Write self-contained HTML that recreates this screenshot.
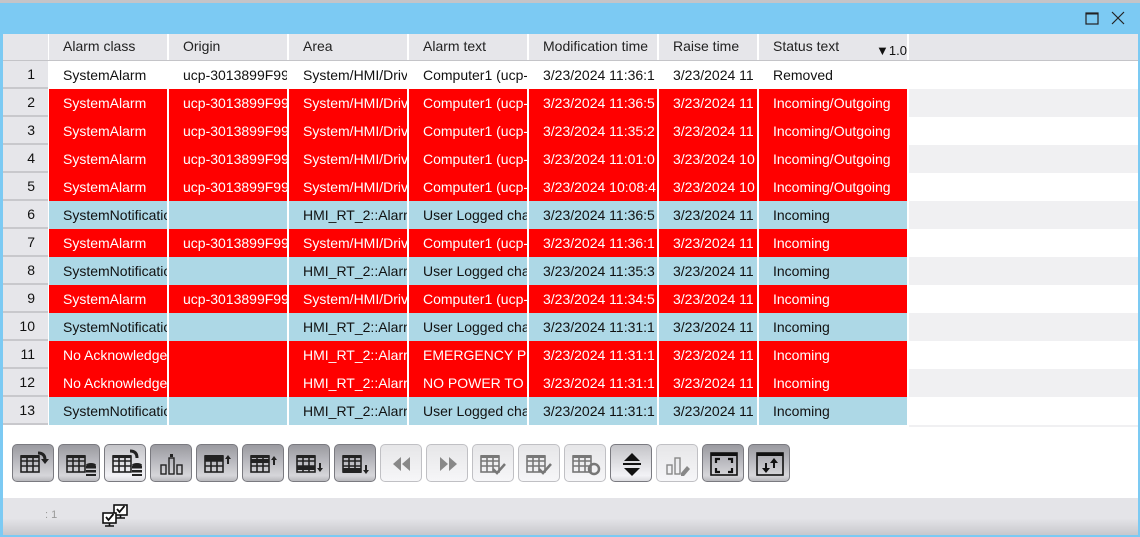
<!DOCTYPE html>
<html><head><meta charset="utf-8"><style>
*{margin:0;padding:0;box-sizing:border-box}
body{width:1140px;height:537px;overflow:hidden;background:#fff;font-family:"Liberation Sans","DejaVu Sans",sans-serif;position:relative}
.topline{position:absolute;left:0;top:0;width:1140px;height:3px;background:#c4c4c8}
.title{position:absolute;left:0;top:3px;width:1140px;height:31px;background:#7ccaf3}
.lb{position:absolute;left:0;top:3px;width:3px;height:534px;background:#7ccaf3}
.rb{position:absolute;right:0;top:3px;width:2px;height:534px;background:#7ccaf3}
.bb{position:absolute;left:0;bottom:0;width:1140px;height:2px;background:#7ccaf3}
.cell{position:absolute;height:28px;line-height:28px;font-size:14px;white-space:nowrap;overflow:hidden;padding-left:14px;color:#111}
.hd{position:absolute;top:34px;height:26px;line-height:25px;font-size:14px;background:#e6e6ea;color:#222;padding-left:14px;white-space:nowrap;overflow:hidden}
.num{position:absolute;left:3px;width:45px;height:26px;background:#e6e6ea;text-align:right;padding-right:13px;font-size:14px;line-height:26px;color:#111}
.btn{position:absolute;top:444px;width:42px;height:38px;border-radius:5px;border:1px solid #7a7a80;background:linear-gradient(#9a9aa0,#d6d6da 85%,#b8b8bc)}
.btn.sel{background:linear-gradient(#c4c4c8,#f2f2f6 85%,#dcdce0)}
.btn.dis{border-color:#c0c0c4;background:linear-gradient(#e6e6e8,#f6f6f8)}
.btn svg{position:absolute;left:0;top:0}
.status{position:absolute;left:3px;top:498px;width:1135px;height:37px;background:linear-gradient(#e4e4e8 55%,#c8c8cc)}
</style></head><body>
<div class="topline"></div><div class="title"></div>
<svg style="position:absolute;left:1085px;top:11px" width="14" height="14"><rect x="1" y="2" width="12" height="11" fill="none" stroke="#222" stroke-width="1.2"/><line x1="1" y1="2.5" x2="13" y2="2.5" stroke="#222" stroke-width="2"/></svg>
<svg style="position:absolute;left:1111px;top:11px" width="14" height="14"><path d="M1 1L13 13M13 1L1 13" stroke="#222" stroke-width="1.2"/></svg>
<div class="lb"></div><div class="rb"></div>
<div id="g"></div>
<div class="status"><span style="position:absolute;left:42px;top:11px;font-size:11px;color:#999">: 1</span>
<svg style="position:absolute;left:96px;top:5px" width="36" height="28" viewBox="0 0 36 28"><g fill="#fff" stroke="#111" stroke-width="1.6"><rect x="15" y="2" width="13" height="10"/><rect x="4" y="10" width="13" height="10"/></g><path d="M21.5 12v3M17 15h9M10.5 20v3M6 23h9" stroke="#111" stroke-width="1.6"/><path d="M18 6l2.5 3 5-6M7 14l2.5 3 5-6" stroke="#111" stroke-width="1.8" fill="none"/></svg></div>
<div class="bb"></div>
<script>
var cols=[[49,118,"Alarm class"],[169,118,"Origin"],[289,118,"Area"],[409,118,"Alarm text"],[529,128,"Modification time"],[659,98,"Raise time"],[759,148,"Status text"]];
var rows=[
["w","SystemAlarm","ucp-3013899F99","System/HMI/Drivers","Computer1 (ucp-","3/23/2024 11:36:1","3/23/2024 11","Removed"],
["r","SystemAlarm","ucp-3013899F99","System/HMI/Drivers","Computer1 (ucp-","3/23/2024 11:36:5","3/23/2024 11","Incoming/Outgoing"],
["r","SystemAlarm","ucp-3013899F99","System/HMI/Drivers","Computer1 (ucp-","3/23/2024 11:35:2","3/23/2024 11","Incoming/Outgoing"],
["r","SystemAlarm","ucp-3013899F99","System/HMI/Drivers","Computer1 (ucp-","3/23/2024 11:01:0","3/23/2024 10","Incoming/Outgoing"],
["r","SystemAlarm","ucp-3013899F99","System/HMI/Drivers","Computer1 (ucp-","3/23/2024 10:08:4","3/23/2024 10","Incoming/Outgoing"],
["b","SystemNotification","","HMI_RT_2::Alarms","User Logged changed","3/23/2024 11:36:5","3/23/2024 11","Incoming"],
["r","SystemAlarm","ucp-3013899F99","System/HMI/Drivers","Computer1 (ucp-","3/23/2024 11:36:1","3/23/2024 11","Incoming"],
["b","SystemNotification","","HMI_RT_2::Alarms","User Logged changed","3/23/2024 11:35:3","3/23/2024 11","Incoming"],
["r","SystemAlarm","ucp-3013899F99","System/HMI/Drivers","Computer1 (ucp-","3/23/2024 11:34:5","3/23/2024 11","Incoming"],
["b","SystemNotification","","HMI_RT_2::Alarms","User Logged changed","3/23/2024 11:31:1","3/23/2024 11","Incoming"],
["r","No Acknowledgement","","HMI_RT_2::Alarms","EMERGENCY PRESSED","3/23/2024 11:31:1","3/23/2024 11","Incoming"],
["r","No Acknowledgement","","HMI_RT_2::Alarms","NO POWER TO AUX","3/23/2024 11:31:1","3/23/2024 11","Incoming"],
["b","SystemNotification","","HMI_RT_2::Alarms","User Logged changed","3/23/2024 11:31:1","3/23/2024 11","Incoming"]];
var h='<div style="position:absolute;left:3px;top:34px;width:1135px;height:393px;background:#fff"></div>';
h+='<div class="hd" style="left:3px;width:45px"></div>';
cols.forEach(function(c){h+='<div class="hd" style="left:'+c[0]+'px;width:'+c[1]+'px">'+c[2]+'</div>'});
h+='<div class="hd" style="left:909px;width:229px"></div>';
h+='<div style="position:absolute;left:876px;top:43px;font-size:13px;color:#111">&#9660;1.0</div>';
h+='<div style="position:absolute;left:3px;top:60px;width:1135px;height:1px;background:#c4c4c8"></div>';
rows.forEach(function(r,i){var y=61+28*i;
 h+='<div class="num" style="top:'+y+'px">'+(i+1)+'</div>';
 h+='<div style="position:absolute;left:3px;top:'+(y+26)+'px;width:45px;height:2px;background:#c8c8cc"></div>';
 var bg=r[0]=="r"?"#ff0000":r[0]=="b"?"#add8e6":"#fff",fc=r[0]=="r"?"#fff":"#111";
 cols.forEach(function(c,j){h+='<div class="cell" style="left:'+c[0]+'px;top:'+y+'px;width:'+c[1]+'px;background:'+bg+';color:'+fc+'">'+r[j+1]+'</div>'});
 h+='<div style="position:absolute;left:909px;top:'+y+'px;width:229px;height:28px;background:'+(i%2?"#f0f0f2":"#fff")+'"></div>';
});
h+='<div style="position:absolute;left:909px;top:425px;width:229px;height:2px;background:#f0f0f2"></div>';
var grid='<g fill="none" stroke="#222" stroke-width="1.6"><rect x="8" y="11" width="18" height="16"/><path d="M8 16h18M8 21h18M14 11v16M20 11v16"/></g><rect x="8" y="10" width="18" height="3" fill="#222"/>';
var gridg=grid.replace(/#222/g,'#777');
var ic=[
grid+'<path d="M25 8q7 0 7 7" stroke="#222" stroke-width="3" fill="none"/><path d="M28 14h8l-4 5z" fill="#222"/>',
grid+'<g fill="#222"><ellipse cx="32" cy="20" rx="5" ry="2"/><rect x="27" y="21" width="10" height="2.5"/><rect x="27" y="25" width="10" height="2.5"/><rect x="27" y="29" width="10" height="2"/></g>',
grid+'<path d="M25 6q7 0 7 7" stroke="#222" stroke-width="3" fill="none"/><g fill="#222"><ellipse cx="32" cy="20" rx="5" ry="2"/><rect x="27" y="21" width="10" height="2.5"/><rect x="27" y="25" width="10" height="2.5"/><rect x="27" y="29" width="10" height="2"/></g>',
'<g fill="none" stroke="#222" stroke-width="1.4"><rect x="10" y="20" width="5" height="9"/><rect x="18" y="13" width="5" height="16"/><rect x="26" y="20" width="5" height="9"/></g><rect x="19" y="9" width="3" height="3" fill="#222"/>',
grid+'<rect x="8" y="10" width="18" height="6" fill="#222"/><path d="M31 10l3 4h-2v5h-2v-5h-2z" fill="#222"/>',
grid+'<rect x="8" y="14" width="18" height="4" fill="#222"/><path d="M31 11l3 4h-2v5h-2v-5h-2z" fill="#222"/>',
grid+'<rect x="8" y="21" width="18" height="4" fill="#222"/><path d="M31 27l3-4h-2v-5h-2v5h-2z" fill="#222"/>',
grid+'<rect x="8" y="23" width="18" height="5" fill="#222"/><path d="M31 29l3-4h-2v-5h-2v5h-2z" fill="#222"/>',
'<path d="M20 12v14l-8-7zM29 12v14l-8-7z" fill="#888"/>',
'<path d="M13 12v14l8-7zM22 12v14l8-7z" fill="#888"/>',
gridg+'<path d="M20 24l4 4 8-9" stroke="#777" stroke-width="2.5" fill="none"/>',
gridg+'<path d="M20 24l4 4 8-9" stroke="#777" stroke-width="2.5" fill="none"/>',
gridg+'<circle cx="29" cy="24" r="5" stroke="#777" stroke-width="2.5" fill="none"/>',
'<path d="M21 8l8 8H13zM21 31l8-8H13z" fill="#111"/><rect x="12" y="18" width="18" height="2" fill="#111"/>',
'<g fill="none" stroke="#888" stroke-width="1.4"><rect x="10" y="20" width="5" height="9"/><rect x="18" y="13" width="5" height="16"/></g><path d="M24 28l6-7 3 3-6 7h-3z" fill="#888"/>',
'<rect x="8" y="8" width="26" height="22" fill="none" stroke="#111" stroke-width="1.6"/><rect x="8" y="8" width="26" height="3" fill="#111"/><path d="M13 18v-4h4M25 14h4v4M29 23v4h-4M17 27h-4v-4" stroke="#111" stroke-width="2.2" fill="none"/>',
'<rect x="8" y="8" width="26" height="22" fill="none" stroke="#111" stroke-width="1.6"/><rect x="8" y="8" width="26" height="3" fill="#111"/><path d="M25 13l4 5h-3v5h-2v-5h-3zM17 28l4-5h-3v-5h-2v5h-3z" fill="#111"/>'];
var cls=["","","sel","","","","","","dis","dis","dis","dis","dis","sel","dis","",""];
ic.forEach(function(s,i){h+='<div class="btn '+cls[i]+'" style="left:'+(12+46*i)+'px"><svg width="42" height="38" viewBox="0 0 42 38">'+s+'</svg></div>'});
document.getElementById('g').innerHTML=h;
</script>
</body></html>
